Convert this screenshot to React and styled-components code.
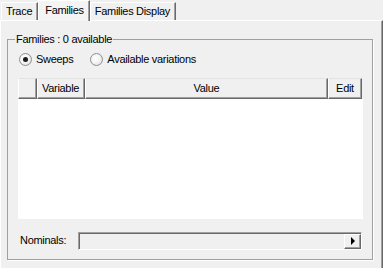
import React from 'react';
import styled, { createGlobalStyle } from 'styled-components';

const GlobalStyle = createGlobalStyle`
  html, body {
    margin: 0;
    padding: 0;
    background: #f0f0f0;
  }
  body {
    font-family: "Liberation Sans", Arial, sans-serif;
    font-size: 11px;
    letter-spacing: -0.3px;
    color: #000;
  }
`;

const Window = styled.div`
  width: 383px;
  height: 268px;
  overflow: hidden;
  display: flex;
  flex-direction: column;
  background: #f0f0f0;
`;

const TabStrip = styled.div`
  display: flex;
  align-items: flex-end;
  height: 21px;
  padding-left: 1px;
  margin-bottom: -1px;
  position: relative;
  z-index: 1;
`;

const Tab = styled.div`
  box-sizing: border-box;
  height: ${({ $active }) => ($active ? '21px' : '18px')};
  padding: ${({ $active }) => ($active ? '3px 5px 0 6px' : '2px 5px 0 4px')};
  margin: ${({ $active }) => ($active ? '0' : '0 0 1px 0')};
  background: ${({ $active }) => ($active ? '#f4f4f4' : '#f0f0f0')};
  border-top: 1px solid #fff;
  border-left: 1px solid #fff;
  border-right: 1px solid #696969;
  box-shadow: inset -1px 0 0 #a0a0a0;
  line-height: 13px;
  white-space: nowrap;
`;

const Panel = styled.div`
  flex: 1;
  border-top: 1px solid #fff;
  border-left: 1px solid #fff;
  border-right: 1px solid #696969;
  box-shadow: inset -1px 0 0 #a0a0a0;
  padding: 12px 9px 0 6px;
`;

const GroupBox = styled.fieldset`
  margin: 0;
  padding: 7px 9px 9px 10px;
  border: 1px solid #a0a0a0;
  box-shadow: 1px 1px 0 #fff;
  display: flex;
  flex-direction: column;
`;

const GroupTitle = styled.legend`
  margin-left: -3px;
  padding: 0 1px;
  line-height: 13px;
`;

const RadioRow = styled.div`
  display: flex;
  align-items: center;
  gap: 17px;
  height: 13px;
  padding-left: 1px;
`;

const RadioOption = styled.label`
  display: flex;
  align-items: center;
  gap: 4px;
  line-height: 13px;
`;

const RadioCircle = styled.span`
  box-sizing: border-box;
  width: 13px;
  height: 13px;
  border-radius: 50%;
  border: 1px solid #8e8f8f;
  background: radial-gradient(circle at 40% 40%, #ffffff 0%, #f4f4f4 45%, #d6d6d6 100%);
  display: flex;
  align-items: center;
  justify-content: center;

  &::after {
    content: '';
    width: 5px;
    height: 5px;
    border-radius: 50%;
    background: ${({ $checked }) => ($checked ? '#1c1c1c' : 'transparent')};
  }
`;

const Grid = styled.div`
  margin-top: 12px;
  height: 141px;
  background: #fff;
  display: flex;
  flex-direction: column;
`;

const HeaderRow = styled.div`
  display: grid;
  grid-template-columns: 19px 48px 243px 34px;
  height: 21px;
  background: #f0f0f0;
`;

const HeaderCell = styled.div`
  box-sizing: border-box;
  border-top: 1px solid #e3e3e3;
  border-left: 1px solid #fff;
  border-right: 1px solid #696969;
  border-bottom: 1px solid #696969;
  box-shadow: inset -1px -1px 0 #a0a0a0;
  display: flex;
  align-items: center;
  justify-content: ${({ $align }) => $align || 'center'};
  padding: 0 4px;
  line-height: 13px;
  white-space: nowrap;
`;

const NominalRow = styled.div`
  margin-top: 12px;
  display: flex;
  align-items: center;
  height: 19px;
`;

const NominalLabel = styled.span`
  width: 58px;
  padding-left: 2px;
  line-height: 13px;
`;

const ComboField = styled.div`
  box-sizing: border-box;
  flex: 1;
  margin-right: 1px;
  height: 18px;
  border: 1px solid;
  border-color: #a0a0a0 #fff #fff #a0a0a0;
  box-shadow: inset 1px 1px 0 #696969;
  background: #f0f0f0;
  display: flex;
  justify-content: flex-end;
  align-items: center;
  padding: 1px 0 0 0;
`;

const ArrowButton = styled.div`
  box-sizing: border-box;
  width: 17px;
  height: 15px;
  border: 1px solid;
  border-color: #fff #696969 #696969 #fff;
  box-shadow: inset -1px -1px 0 #a0a0a0;
  background: #f0f0f0;
  display: flex;
  align-items: center;
  justify-content: center;

  &::after {
    content: '';
    width: 0;
    height: 0;
    margin-left: 1px;
    border-top: 4px solid transparent;
    border-bottom: 4px solid transparent;
    border-left: 4px solid #000;
  }
`;

const tabs = ['Trace', 'Families', 'Families Display'];

const columns = [
  { label: '', align: 'center' },
  { label: 'Variable', align: 'flex-start' },
  { label: 'Value', align: 'center' },
  { label: 'Edit', align: 'center' },
];

const App = () => (
  <Window>
    <GlobalStyle />
    <TabStrip>
      {tabs.map(t => (
        <Tab key={t} $active={t === 'Families'}>{t}</Tab>
      ))}
    </TabStrip>
    <Panel>
      <GroupBox>
        <GroupTitle>Families : 0 available</GroupTitle>
        <RadioRow>
          <RadioOption><RadioCircle $checked />Sweeps</RadioOption>
          <RadioOption><RadioCircle />Available variations</RadioOption>
        </RadioRow>
        <Grid>
          <HeaderRow>
            {columns.map((c, i) => (
              <HeaderCell key={i} $align={c.align}>{c.label}</HeaderCell>
            ))}
          </HeaderRow>
        </Grid>
        <NominalRow>
          <NominalLabel>Nominals:</NominalLabel>
          <ComboField>
            <ArrowButton />
          </ComboField>
        </NominalRow>
      </GroupBox>
    </Panel>
  </Window>
);

export default App;
